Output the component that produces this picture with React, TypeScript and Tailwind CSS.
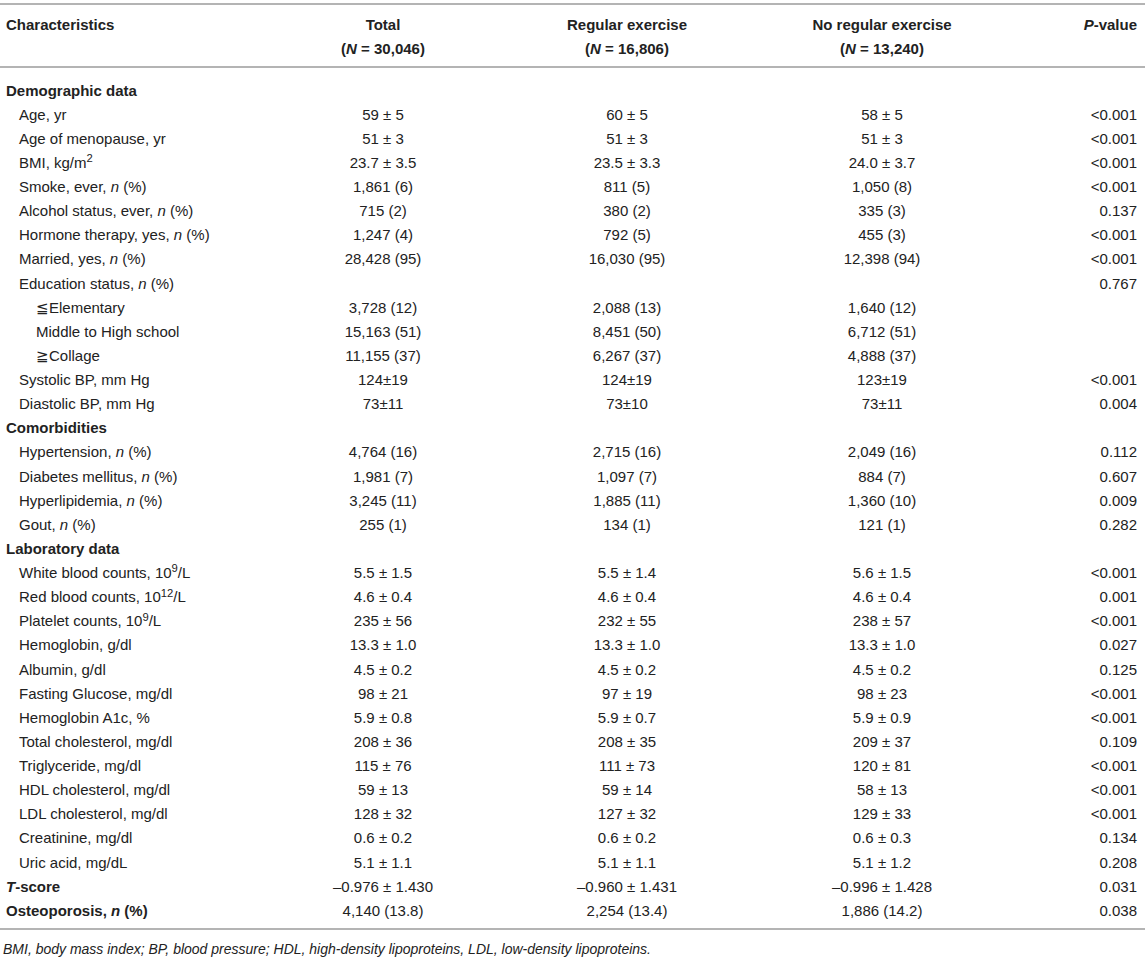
import React from "react";

type Row = {
  t: "s" | "i" | "u" | "b";
  l: React.ReactNode;
  v?: string[];
};

const n = <i>n</i>;

const rows: Row[] = [
  { t: "s", l: "Demographic data" },
  { t: "i", l: "Age, yr", v: ["59 ± 5", "60 ± 5", "58 ± 5", "<0.001"] },
  { t: "i", l: "Age of menopause, yr", v: ["51 ± 3", "51 ± 3", "51 ± 3", "<0.001"] },
  { t: "i", l: <>BMI, kg/m<sup>2</sup></>, v: ["23.7 ± 3.5", "23.5 ± 3.3", "24.0 ± 3.7", "<0.001"] },
  { t: "i", l: <>Smoke, ever, {n} (%)</>, v: ["1,861 (6)", "811 (5)", "1,050 (8)", "<0.001"] },
  { t: "i", l: <>Alcohol status, ever, {n} (%)</>, v: ["715 (2)", "380 (2)", "335 (3)", "0.137"] },
  { t: "i", l: <>Hormone therapy, yes, {n} (%)</>, v: ["1,247 (4)", "792 (5)", "455 (3)", "<0.001"] },
  { t: "i", l: <>Married, yes, {n} (%)</>, v: ["28,428 (95)", "16,030 (95)", "12,398 (94)", "<0.001"] },
  { t: "i", l: <>Education status, {n} (%)</>, v: ["", "", "", "0.767"] },
  { t: "u", l: "≦Elementary", v: ["3,728 (12)", "2,088 (13)", "1,640 (12)", ""] },
  { t: "u", l: "Middle to High school", v: ["15,163 (51)", "8,451 (50)", "6,712 (51)", ""] },
  { t: "u", l: "≧Collage", v: ["11,155 (37)", "6,267 (37)", "4,888 (37)", ""] },
  { t: "i", l: "Systolic BP, mm Hg", v: ["124±19", "124±19", "123±19", "<0.001"] },
  { t: "i", l: "Diastolic BP, mm Hg", v: ["73±11", "73±10", "73±11", "0.004"] },
  { t: "s", l: "Comorbidities" },
  { t: "i", l: <>Hypertension, {n} (%)</>, v: ["4,764 (16)", "2,715 (16)", "2,049 (16)", "0.112"] },
  { t: "i", l: <>Diabetes mellitus, {n} (%)</>, v: ["1,981 (7)", "1,097 (7)", "884 (7)", "0.607"] },
  { t: "i", l: <>Hyperlipidemia, {n} (%)</>, v: ["3,245 (11)", "1,885 (11)", "1,360 (10)", "0.009"] },
  { t: "i", l: <>Gout, {n} (%)</>, v: ["255 (1)", "134 (1)", "121 (1)", "0.282"] },
  { t: "s", l: "Laboratory data" },
  { t: "i", l: <>White blood counts, 10<sup>9</sup>/L</>, v: ["5.5 ± 1.5", "5.5 ± 1.4", "5.6 ± 1.5", "<0.001"] },
  { t: "i", l: <>Red blood counts, 10<sup>12</sup>/L</>, v: ["4.6 ± 0.4", "4.6 ± 0.4", "4.6 ± 0.4", "0.001"] },
  { t: "i", l: <>Platelet counts, 10<sup>9</sup>/L</>, v: ["235 ± 56", "232 ± 55", "238 ± 57", "<0.001"] },
  { t: "i", l: "Hemoglobin, g/dl", v: ["13.3 ± 1.0", "13.3 ± 1.0", "13.3 ± 1.0", "0.027"] },
  { t: "i", l: "Albumin, g/dl", v: ["4.5 ± 0.2", "4.5 ± 0.2", "4.5 ± 0.2", "0.125"] },
  { t: "i", l: "Fasting Glucose, mg/dl", v: ["98 ± 21", "97 ± 19", "98 ± 23", "<0.001"] },
  { t: "i", l: "Hemoglobin A1c, %", v: ["5.9 ± 0.8", "5.9 ± 0.7", "5.9 ± 0.9", "<0.001"] },
  { t: "i", l: "Total cholesterol, mg/dl", v: ["208 ± 36", "208 ± 35", "209 ± 37", "0.109"] },
  { t: "i", l: "Triglyceride, mg/dl", v: ["115 ± 76", "111 ± 73", "120 ± 81", "<0.001"] },
  { t: "i", l: "HDL cholesterol, mg/dl", v: ["59 ± 13", "59 ± 14", "58 ± 13", "<0.001"] },
  { t: "i", l: "LDL cholesterol, mg/dl", v: ["128 ± 32", "127 ± 32", "129 ± 33", "<0.001"] },
  { t: "i", l: "Creatinine, mg/dl", v: ["0.6 ± 0.2", "0.6 ± 0.2", "0.6 ± 0.3", "0.134"] },
  { t: "i", l: "Uric acid, mg/dL", v: ["5.1 ± 1.1", "5.1 ± 1.1", "5.1 ± 1.2", "0.208"] },
  { t: "b", l: <><i>T</i>-score</>, v: ["–0.976 ± 1.430", "–0.960 ± 1.431", "–0.996 ± 1.428", "0.031"] },
  { t: "b", l: <>Osteoporosis, {n} (%)</>, v: ["4,140 (13.8)", "2,254 (13.4)", "1,886 (14.2)", "0.038"] },
];

function DataRow({ r }: { r: Row }) {
  const labelCls =
    r.t === "s" || r.t === "b"
      ? "pl-[6px] font-bold"
      : r.t === "u"
      ? "pl-[36px]"
      : "pl-[19px]";
  const v = r.v ?? ["", "", "", ""];
  return (
    <div className="flex h-[24.13px] items-center whitespace-nowrap">
      <div className={`w-[283px] ${labelCls}`}>{r.l}</div>
      <div className="w-[200px] text-center">{v[0]}</div>
      <div className="w-[288px] text-center">{v[1]}</div>
      <div className="w-[222px] text-center">{v[2]}</div>
      <div className="w-[144px] text-right">{v[3]}</div>
    </div>
  );
}

export default function App() {
  return (
    <div
      className="w-[1145px] h-[959px] bg-white text-[#222] text-[15px] leading-none overflow-hidden"
      style={{ fontFamily: '"Liberation Sans", Arial, sans-serif' }}
    >
      <div className="h-[3px]" />
      <div className="h-[2px] bg-[#b4b4b4]" />
      <div className="pt-[7px] pb-[6px] font-bold">
        <div className="flex h-[24px] items-center whitespace-nowrap">
          <div className="w-[283px] pl-[6px]">Characteristics</div>
          <div className="w-[200px] text-center">Total</div>
          <div className="w-[288px] text-center">Regular exercise</div>
          <div className="w-[222px] text-center">No regular exercise</div>
          <div className="w-[144px] text-right">
            <i>P</i>-value
          </div>
        </div>
        <div className="flex h-[24px] items-center whitespace-nowrap">
          <div className="w-[283px]" />
          <div className="w-[200px] text-center">
            (<i>N</i> = 30,046)
          </div>
          <div className="w-[288px] text-center">
            (<i>N</i> = 16,806)
          </div>
          <div className="w-[222px] text-center">
            (<i>N</i> = 13,240)
          </div>
          <div className="w-[144px]" />
        </div>
      </div>
      <div className="h-[2px] bg-[#b4b4b4]" />
      <div className="pt-[10px] pb-[6px]">
        {rows.map((r, i) => (
          <DataRow key={i} r={r} />
        ))}
      </div>
      <div className="h-[2px] bg-[#b4b4b4]" />
      <div className="pl-[3px] pt-[12px] text-[14px] italic">
        BMI, body mass index; BP, blood pressure; HDL, high-density lipoproteins, LDL, low-density lipoproteins.
      </div>
    </div>
  );
}
